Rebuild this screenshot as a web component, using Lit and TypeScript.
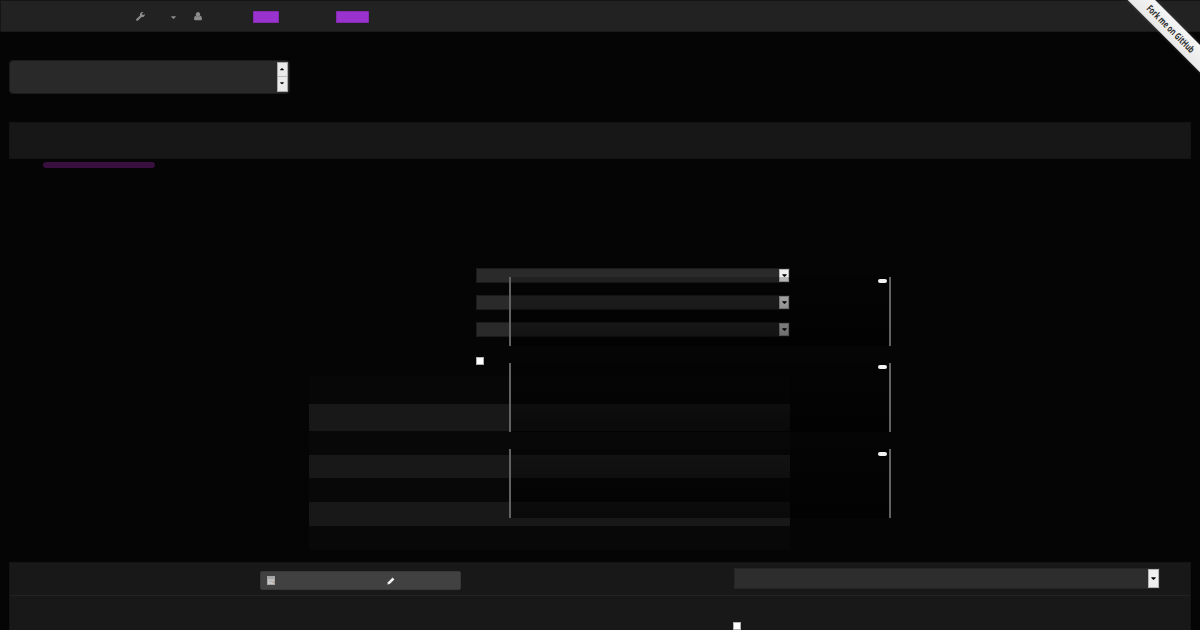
import { LitElement, html, css, svg } from "lit";
import { customElement } from "lit/decorators.js";

const rows = ["head", "odd first", "even", "odd", "even", "odd", "even"];

const caret = svg`<path d="M.3 .3h4.4v.8L2.5 2.9 .3 1.1z" />`;

@customElement("app-root")
export class AppRoot extends LitElement {
  static styles = css`
    :host {
      display: block;
      position: relative;
      width: 1200px;
      height: 630px;
      overflow: hidden;
      background: #050505;
      font-family: "Open Sans", sans-serif;
    }
    * { box-sizing: border-box; }
    svg { display: block; overflow: visible; }
    .page { display: flex; flex-direction: column; padding: 0 9.4px; height: 630px; }
    .nav {
      flex: none;
      display: flex;
      align-items: flex-start;
      height: 32px;
      margin: 0 -9.4px;
      padding: 11px 0 0 134.5px;
      background: #222;
      border: 1px solid #151515;
      border-right: 0;
      border-bottom-color: #1a1a1a;
      fill: #8c8c8c;
    }
    .wrench { width: 9px; height: 9px; }
    .nav-caret { margin: 4px 0 0 26px; width: 5px; }
    .user { margin-left: 18.5px; }
    .badge { height: 12px; margin-top: -1px; background: #9a32cd; border-radius: 1px; box-shadow: inset 0 0 0 .5px #6f2594; }
    .b1 { width: 26px; margin-left: 51px; }
    .b2 { width: 33.5px; margin-left: 56.5px; }
    .entry {
      flex: none;
      display: flex;
      justify-content: flex-end;
      width: 281px;
      height: 34px;
      margin-top: 28px;
      padding: 1px 1.5px 1px 0;
      background: #292929;
      border: 1px solid #1b1b1b;
      border-radius: 4px;
    }
    .spin { display: flex; flex-direction: column; width: 11px; height: 30px; border: 1px solid #aaa; background: #eaeaea; }
    .spin div { flex: 1; display: grid; place-items: center; }
    .spin div + div { border-top: 1px solid #bbb; padding-bottom: 2px; }
    .spin svg { width: 4px; height: 2.4px; }
    .up { transform: rotate(180deg); }
    .band { flex: none; height: 37.4px; margin-top: 28px; background: #171717; border: 1px solid #131313; }
    .progress { flex: none; width: 112px; height: 6px; margin: 2.6px 0 0 34px; border-radius: 3px; background: #380f3f; }
    .form { flex: none; width: 314px; margin: 100px 0 0 466.9px; display: flex; flex-direction: column; gap: 11.5px; }
    .field { display: flex; justify-content: flex-end; background: #2a2a2a; border: 1px solid #1b1b1b; height: 15.5px; padding: 0; }
    .drop { display: grid; place-items: center; width: 10.5px; height: 13.5px; background: #f0f0f0; border: 1px solid #b5b5b5; }
    .check { width: 8px; height: 8px; background: #fff; border: 1px solid #b0b0b0; }
    .form .check { margin-top: 8px; }
    .table { flex: none; width: 481.5px; margin: 10.9px 0 0 299.6px; display: grid; grid-template-rows: 28px 27.2px 23.7px 23.7px 23.7px 23.7px 23.7px; }
    .row { background: #080808; }
    .row.head { background: #070707; }
    .row.odd { background: #181818; }
    .panel { flex: none; height: 80px; margin-top: 12.6px; background: #181818; border: 1px solid #141414; }
    .tools { display: flex; height: 33px; border-bottom: 1px solid #232323; padding: 5px 30px 0 250px; justify-content: space-between; }
    .buttons { display: flex; align-items: center; width: 200.5px; height: 19px; margin-top: 3px; background: #414141; border: 1px solid #383838; border-radius: 2px; padding-left: 5.5px; gap: 112px; }
    .select { display: flex; justify-content: flex-end; width: 425.5px; height: 21.3px; background: #2d2d2d; border: 1px solid #252525; }
    .select .drop { height: 19.3px; }
    .panel > .check { margin: 25.5px 0 0 722.9px; }
    .cards { position: absolute; left: 509px; top: 277px; display: flex; flex-direction: column; gap: 17.2px; width: 382px; }
    .card {
      display: flex;
      justify-content: flex-end;
      height: 69px;
      padding: 2.3px 2px 0 0;
      border: solid #626262;
      border-width: 0 2px;
      background: linear-gradient(rgba(0, 0, 0, .22), rgba(0, 0, 0, .6)) padding-box;
    }
    .pill { width: 9px; height: 4px; border-radius: 2px; background: #f2f2f2; }
    .ribbon { position: absolute; top: 0; right: 0; }
    .label { font: 700 9.5px "Open Sans", sans-serif; fill: #2a2a2a; }
  `;

  private drop() {
    return html`<div class="drop"><svg width="5" height="3">${caret}</svg></div>`;
  }

  render() {
    return html`
      <div class="page">
        <div class="nav">
          <svg class="wrench" viewBox="0 0 9 9"><path d="M8.8 2.1 7.3 3.1 6.1 2.5V1.3L7.5.2A2.6 2.6 0 0 0 4 3.4L.4 7a1.1 1.1 0 0 0 1.6 1.6L5.6 5A2.6 2.6 0 0 0 8.8 2.1z" /></svg>
          <svg class="nav-caret" width="5" height="3">${caret}</svg>
          <svg class="user" width="8" height="9" viewBox="0 0 8 9"><ellipse cx="4" cy="2.5" rx="2.2" ry="2.5" /><path d="M1.6 3.7Q4 6 6.4 3.7 8 4.3 8 7 7.9 8.2 6.8 8.2H1.2Q.1 8.2 0 7 0 4.3 1.6 3.7z" /></svg>
          <div class="badge b1"></div>
          <div class="badge b2"></div>
        </div>
        <div class="entry">
          <div class="spin">
            <div><svg class="up" viewBox="0 0 5 3">${caret}</svg></div>
            <div><svg viewBox="0 0 5 3">${caret}</svg></div>
          </div>
        </div>
        <div class="band"></div>
        <div class="progress"></div>
        <div class="form">
          ${[0, 1, 2].map(() => html`<div class="field">${this.drop()}</div>`)}
          <div class="check"></div>
        </div>
        <div class="table">${rows.map((r) => html`<div class="row ${r}"></div>`)}</div>
        <div class="panel">
          <div class="tools">
            <div class="buttons">
              <svg width="8" height="9" viewBox="0 0 8 9"><rect x=".4" y=".4" width="7.2" height="8.2" fill="#c8c8c8" stroke="#aaa" stroke-width=".8" /><path d="M1 2h6" stroke="#777" stroke-width=".8" /><path d="M2 4h4.5M2 5.6h3" stroke="#aaa" stroke-width=".7" /><path d="M5.5 6.3h1.6" stroke="#a18061" /></svg>
              <svg width="8" height="8" viewBox="0 0 8 8"><path d="M.5 7.5.9 5.3 5.6.6 7.4 2.4 2.7 7.1z" fill="#f0f0f0" /></svg>
            </div>
            <div class="select">${this.drop()}</div>
          </div>
          <div class="check"></div>
        </div>
      </div>
      <div class="cards">${[0, 1, 2].map(() => html`<div class="card"><div class="pill"></div></div>`)}</div>
      <svg class="ribbon" width="88" height="88" viewBox="1112 0 88 88">
        <defs>
          <filter id="soft" x="-20%" y="-20%" width="140%" height="140%"><feGaussianBlur stdDeviation="1.5" /></filter>
          <linearGradient id="paper" x2="0" y2="1"><stop stop-color="#f6f6f6" /><stop offset="1" stop-color="#e8e8e8" /></linearGradient>
        </defs>
        <path d="M1118-10 1210 82V55L1145-10z" fill="#777" opacity=".6" filter="url(#soft)" />
        <g transform="translate(1170.5 29) rotate(45)">
          <rect x="-70" y="-9.6" width="140" height="19.3" fill="url(#paper)" />
          <text class="label" x="-31.5" y="3.2" textLength="63" lengthAdjust="spacingAndGlyphs">Fork me on GitHub</text>
        </g>
      </svg>
    `;
  }
}
